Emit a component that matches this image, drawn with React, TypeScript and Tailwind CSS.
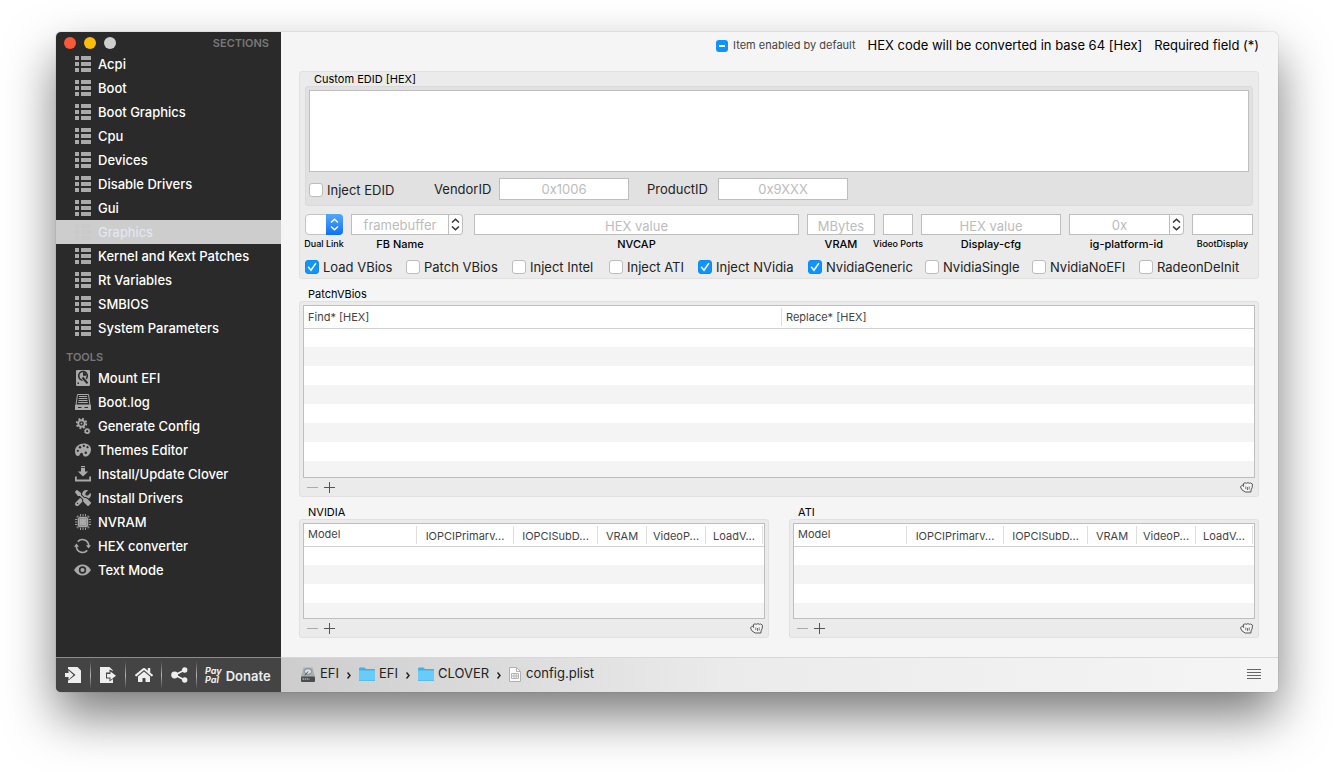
import { useEffect, useRef, type ReactNode } from 'react';
import { FaHome } from 'react-icons/fa';
import { FaScrewdriverWrench } from 'react-icons/fa6';

const sections = [
  'Acpi',
  'Boot',
  'Boot Graphics',
  'Cpu',
  'Devices',
  'Disable Drivers',
  'Gui',
  'Graphics',
  'Kernel and Kext Patches',
  'Rt Variables',
  'SMBIOS',
  'System Parameters',
];

const ListIcon = () => (
  <svg width="16" height="16" viewBox="0 0 16 16" fill="currentColor">
    <path d="M0 0h4v4H0zM6 0h10v4H6zM0 6h4v4H0zM6 6h10v4H6zM0 12h4v4H0zM6 12h10v4H6z" />
  </svg>
);

const DiskIcon = () => (
  <svg width="16" height="16" viewBox="0 0 16 16">
    <rect x="1" y="0" width="14" height="16" rx="1" fill="currentColor" />
    <circle cx="8" cy="5.8" r="4.3" fill="none" stroke="#2a2a2a" strokeWidth="1.6" />
    <path d="M8 5.800V2.300a3.500 3.500 0 0 1 3.400 3.500z" fill="#2a2a2a" />
    <path d="m7.500 7.500 5.300 6" stroke="currentColor" strokeWidth="3.600" />
    <path d="m7.500 7.500 5 5.800" stroke="#2a2a2a" strokeWidth="2" />
    <path d="M2.500 12.500H4V14H2.500z" fill="#2a2a2a" />
  </svg>
);

const LogIcon = () => (
  <svg width="16" height="16" viewBox="0 0 16 16">
    <path d="M2.500.5h11l1.500 10.500H1z" fill="none" stroke="currentColor" />
    <path d="M4 2.500h8M3.700 4.500h8.600M3.500 6.500h9M3.200 8.500h9.600" stroke="currentColor" />
    <path d="M0 11h16v5H0z" fill="currentColor" />
    <path d="M3 13.500h10" stroke="#2a2a2a" />
    <path d="M6.500 13.500h3" stroke="currentColor" />
  </svg>
);

const GearsIcon = () => (
  <svg width="16" height="16" viewBox="0 0 16 16" fill="none" stroke="currentColor">
    <circle cx="6.500" cy="5.500" r="3.300" strokeWidth="1.900" />
    <circle cx="6.500" cy="5.500" r="4.800" strokeWidth="1.800" strokeDasharray="1.900 1.870" />
    <circle cx="6.500" cy="5.500" r="0.900" fill="currentColor" stroke="none" />
    <circle cx="12.200" cy="13.200" r="1.900" strokeWidth="1.600" />
    <circle cx="12.200" cy="13.200" r="2.800" strokeWidth="0.800" strokeDasharray="1.100 1.100" />
  </svg>
);

const PaletteIcon = () => (
  <svg width="16" height="16" viewBox="0 0 16 16">
    <path
      d="M9 1.500C4 1.500 0 4.800 0 9c0 3 1 5 3 5 2.300 0 1.700-3.200 3.600-3.200 2 0 .7 2.900 2.900 3.600C13 15.300 16 11.500 16 7.500c0-3.600-3-6-7-6z"
      fill="currentColor"
    />
    <g fill="#2a2a2a">
      <circle cx="2.800" cy="8.800" r="1.100" />
      <circle cx="5" cy="5.300" r="1.200" />
      <circle cx="8.800" cy="3.900" r="1.100" />
      <circle cx="12.500" cy="5.200" r="1.100" />
      <circle cx="10.800" cy="10.800" r="1.200" />
    </g>
  </svg>
);

const InstallIcon = () => (
  <svg width="16" height="16" viewBox="0 0 16 16" fill="currentColor">
    <path d="M6 0h4v1.200H6zM6 2h4v3.500h3.200L8 10.600 2.800 5.500H6z" />
    <path d="M0 10.500h1.800v3h12.400v-3H16V15.500H0z" />
  </svg>
);

const ChipIcon = () => (
  <svg width="16" height="16" viewBox="0 0 16 16" fill="currentColor">
    <path
      d="M5.500 0v16M8 0v16M10.500 0v16M0 5.500h16M0 8h16M0 10.500h16M3 1.500v13M13 1.500v13M1.500 3h13M1.500 13h13"
      stroke="currentColor"
      strokeWidth="0.900"
    />
    <rect x="2.500" y="2.500" width="11" height="11" rx="1.500" fill="#2a2a2a" />
    <rect x="3" y="3" width="10" height="10" rx="1.500" />
    <rect x="4.500" y="4.500" width="7" height="7" fill="none" stroke="#777" strokeWidth="0.500" />
  </svg>
);

const ConvertIcon = () => (
  <svg width="18" height="16" viewBox="0 0 18 16">
    <path d="M4 3.400A6.600 6.600 0 0 1 15.500 8" fill="none" stroke="currentColor" strokeWidth="1.700" />
    <path d="M14 12.600A6.600 6.600 0 0 1 2.500 8" fill="none" stroke="currentColor" strokeWidth="1.700" />
    <path d="M12.700 7.200h5.300l-2.700 3.500zM0 8.800h5.300L2.600 5.300z" fill="currentColor" />
  </svg>
);

const EyeIcon = () => (
  <svg width="17" height="12" viewBox="0 0 17 12">
    <path d="M0 6C2.500 2 5.300.5 8.500.5S14.500 2 17 6c-2.500 4-5.300 5.500-8.500 5.500S2.500 10 0 6z" fill="currentColor" />
    <circle cx="8.500" cy="6" r="2.900" fill="none" stroke="#2a2a2a" strokeWidth="1.600" />
  </svg>
);

const tools = [
  { name: 'Mount EFI', icon: <DiskIcon /> },
  { name: 'Boot.log', icon: <LogIcon /> },
  { name: 'Generate Config', icon: <GearsIcon /> },
  { name: 'Themes Editor', icon: <PaletteIcon /> },
  { name: 'Install/Update Clover', icon: <InstallIcon /> },
  { name: 'Install Drivers', icon: <FaScrewdriverWrench size={16} /> },
  { name: 'NVRAM', icon: <ChipIcon /> },
  { name: 'HEX converter', icon: <ConvertIcon /> },
  { name: 'Text Mode', icon: <EyeIcon /> },
];

function SideItem({ icon, name, active }: { icon: ReactNode; name: string; active?: boolean }) {
  return (
    <li>
      <a
        href="#"
        className={
          active
            ? 'flex h-6 items-center gap-[7px] bg-[#cdcdcd] pl-[18px] text-[#e3e9f5]'
            : 'flex h-6 items-center gap-[7px] pl-[18px] font-medium text-white'
        }
      >
        <span
          className={
            active
              ? 'flex w-[17px] shrink-0 justify-center text-[#cacaca]'
              : 'flex w-[17px] shrink-0 justify-center text-[#a9a9a9]'
          }
        >
          {icon}
        </span>
        <span className="pt-[2px]">{name}</span>
      </a>
    </li>
  );
}

function Sidebar() {
  return (
    <aside className="flex w-[225px] shrink-0 flex-col bg-[#2a2a2a] text-[13px]">
      <div className="flex h-5 items-center gap-2 pt-[2px] pr-3 pl-2">
        <button aria-label="Close" className="size-3 rounded-full bg-[#fc5736]" />
        <button aria-label="Minimize" className="size-3 rounded-full bg-[#fdbc0a]" />
        <button aria-label="Zoom" className="size-3 rounded-full bg-[#cfcfcf]" />
        <h2 className="ml-auto text-[11px] font-semibold text-[#787878]">SECTIONS</h2>
      </div>
      <ul>
        {sections.map((name) => (
          <SideItem key={name} name={name} icon={<ListIcon />} active={name === 'Graphics'} />
        ))}
      </ul>
      <h2 className="flex h-[26px] items-end pb-[1px] pl-[10px] text-[11px] font-semibold text-[#787878]">TOOLS</h2>
      <ul>
        {tools.map((t) => (
          <SideItem key={t.name} name={t.name} icon={t.icon} />
        ))}
      </ul>
      <SidebarFooter />
    </aside>
  );
}

const Divider = () => <span className="h-7 w-px bg-linear-to-b from-[#444] via-[#b5b5b5] to-[#444]" />;

function SidebarFooter() {
  return (
    <div className="mt-auto flex h-[35px] items-center border-t border-[#8d8d8d] bg-[#444] text-[#eee]">
      <button aria-label="Import" className="flex w-[34px] justify-center">
        <svg width="16" height="16" viewBox="0 0 16 16" fill="currentColor">
          <path d="M3 0h9.500L16 3.500V16H3v-2.500L4 13l6.500-5L4 2.500 3 2z" />
          <path d="M3.500 3.200 8.500 8l-5 4.800V10H0V6h3.500z" />
        </svg>
      </button>
      <Divider />
      <button aria-label="Export" className="flex w-[34px] justify-center">
        <svg width="16" height="16" viewBox="0 0 16 16" fill="currentColor">
          <path d="M0 0h9.500L13 3.500V4L9.500 2.500v3H6v6h3.500v3L13 12v4H0z" />
          <path d="M10.500 4.500 16 8.800l-5.500 4.300v-2.600H7V7h3.500z" />
        </svg>
      </button>
      <Divider />
      <button aria-label="Home" className="flex w-[35px] justify-center">
        <FaHome size={18} />
      </button>
      <Divider />
      <button aria-label="Share" className="flex w-[34px] justify-center">
        <svg width="17" height="16" viewBox="0 0 17 16" fill="currentColor">
          <path d="M13.500 3 4 8l9.500 5" fill="none" stroke="currentColor" strokeWidth="1.700" />
          <circle cx="13.700" cy="3" r="2.700" />
          <circle cx="3.600" cy="8" r="3.400" />
          <circle cx="13.700" cy="13" r="2.700" />
        </svg>
      </button>
      <Divider />
      <button className="flex flex-1 items-center gap-1 pl-2 text-[13px] font-semibold">
        <span className="text-left text-[9px] leading-[9px] font-bold italic">
          Pay
          <br />
          Pal
        </span>
        <span className="pt-[3px]">Donate</span>
      </button>
    </div>
  );
}

function Check({ label, checked }: { label: string; checked?: boolean }) {
  return (
    <label className="flex items-center gap-1 leading-[14px] whitespace-nowrap">
      <span className="grid shrink-0">
        <input
          type="checkbox"
          defaultChecked={checked}
          className="peer col-start-1 row-start-1 size-[14px] appearance-none rounded-[3px] border border-[#bdbdbd] bg-white checked:border-[#0a8bf5] checked:bg-[#0f94fb]"
        />
        <svg
          viewBox="0 0 14 14"
          className="pointer-events-none col-start-1 row-start-1 hidden size-[14px] peer-checked:block"
        >
          <path d="m3.500 7.300 2.500 3L10.600 3.600" fill="none" stroke="#fff" strokeWidth="1.600" strokeLinecap="round" />
        </svg>
      </span>
      {label}
    </label>
  );
}

function DefaultHint() {
  const ref = useRef<HTMLInputElement>(null);

  useEffect(() => {
    if (ref.current) ref.current.indeterminate = true;
  }, []);

  return (
    <label className="flex items-center gap-[5px] text-[11px] text-[#444]">
      <span className="grid items-center justify-items-center">
        <input ref={ref} type="checkbox" className="col-start-1 row-start-1 size-3 appearance-none rounded-[3px] bg-[#0f94fb]" />
        <span className="pointer-events-none col-start-1 row-start-1 h-[2px] w-[6px] bg-white" />
      </span>
      Item enabled by default
    </label>
  );
}

const fieldStyle =
  'w-full min-w-0 border border-[#bebebe] bg-white pt-[2px] text-center text-[13px] placeholder:text-[#bcbcbc] outline-none';

const Arrows = () => (
  <svg width="9" height="13" viewBox="0 0 9 13" fill="none" stroke="currentColor" strokeWidth="1.500">
    <path d="M1 4.500 4.500 1.200 8 4.500M1 8.500l3.500 3.300L8 8.500" />
  </svg>
);

function Field({ id, label, placeholder, small }: { id: string; label: string; placeholder?: string; small?: boolean }) {
  return (
    <div className="flex min-w-0 flex-col items-center">
      <input id={id} placeholder={placeholder} className={`${fieldStyle} h-[21px]`} />
      <FieldLabel id={id} label={label} small={small} />
    </div>
  );
}

function FieldLabel({ id, label, small }: { id: string; label: string; small?: boolean }) {
  return (
    <label
      htmlFor={id}
      className={
        small
          ? 'flex h-[18px] items-center text-[9px] font-medium whitespace-nowrap text-black'
          : 'flex h-[18px] items-center text-[11px] font-medium whitespace-nowrap text-black'
      }
    >
      {label}
    </label>
  );
}

function Combo({ id, label, placeholder }: { id: string; label: string; placeholder: string }) {
  return (
    <>
      <div className="flex h-[21px] w-full">
        <input id={id} placeholder={placeholder} className={fieldStyle} />
        <button
          aria-label={`${label} options`}
          className="flex w-[14px] shrink-0 items-center justify-center rounded-r-[4px] border border-l-0 border-[#bebebe] bg-white text-[#333]"
        >
          <Arrows />
        </button>
      </div>
      <FieldLabel id={id} label={label} />
    </>
  );
}

function GraphicsForm() {
  return (
    <section className="rounded-[3px] border border-[#e0e0e0] bg-[#ebebeb] px-[5px] pb-1 text-[#222]">
      <label htmlFor="edid" className="flex h-[14px] items-center pl-[9px] text-[11px] text-black">
        Custom EDID [HEX]
      </label>
      <div className="rounded-[3px] border border-[#dadada] bg-[#e1e1e1] px-[3px] pt-[3px] pb-[5px]">
        <textarea id="edid" className="block h-[82px] w-full resize-none border border-[#bebebe] bg-white outline-none" />
        <div className="flex items-center pt-[6px] text-[13px]">
          <div className="w-[125px] pt-[2px]">
            <Check label="Inject EDID" />
          </div>
          <label htmlFor="vendor" className="w-[65px] pt-[2px]">
            VendorID
          </label>
          <div className="flex h-[22px] w-[130px]">
            <input id="vendor" placeholder="0x1006" className={fieldStyle} />
          </div>
          <label htmlFor="product" className="w-[89px] pt-[2px] pl-[18px]">
            ProductID
          </label>
          <div className="flex h-[22px] w-[130px]">
            <input id="product" placeholder="0x9XXX" className={fieldStyle} />
          </div>
        </div>
      </div>

      <div className="grid grid-cols-[38px_115px_1fr_68px_30px_140px_115px_61px] gap-2 pt-2">
        <div className="flex flex-col items-center">
          <div className="grid h-[21px] w-full">
            <select
              id="dual"
              className="col-start-1 row-start-1 h-[21px] w-full appearance-none rounded-[4px] border border-[#c4c4c4] bg-white outline-none"
            >
              <option></option>
            </select>
            <span className="pointer-events-none col-start-1 row-start-1 flex h-[21px] w-[17px] items-center justify-center justify-self-end rounded-r-[4px] bg-linear-to-b from-[#52a8fb] to-[#0870f8] text-white">
              <Arrows />
            </span>
          </div>
          <FieldLabel id="dual" label="Dual Link" small />
        </div>
        <div className="grid justify-items-center pr-[3px] *:[label]:pr-[14px]">
          <Combo id="fb" label="FB Name" placeholder="framebuffer" />
        </div>
        <Field id="nvcap" label="NVCAP" placeholder="HEX value" />
        <Field id="vram" label="VRAM" placeholder="MBytes" />
        <Field id="ports" label="Video Ports" small />
        <Field id="cfg" label="Display-cfg" placeholder="HEX value" />
        <div className="grid justify-items-center">
          <Combo id="ig" label="ig-platform-id" placeholder="0x" />
        </div>
        <Field id="bootdisplay" label="BootDisplay" small />
      </div>

      <div className="grid grid-cols-[101fr_106fr_97fr_89fr_110fr_117fr_107fr_107fr_114fr] pt-[7px] text-[13px]">
        <Check label="Load VBios" checked />
        <Check label="Patch VBios" />
        <Check label="Inject Intel" />
        <Check label="Inject ATI" />
        <Check label="Inject NVidia" checked />
        <Check label="NvidiaGeneric" checked />
        <Check label="NvidiaSingle" />
        <Check label="NvidiaNoEFI" />
        <Check label="RadeonDeInit" />
      </div>
    </section>
  );
}

function TableBar() {
  return (
    <div className="flex h-[18px] items-center gap-[6px] pr-[2px] pl-1 text-[#555]">
      <button aria-label="Remove row" className="text-[#aaa]">
        <svg width="11" height="11" viewBox="0 0 11 11" stroke="currentColor">
          <path d="M0 5.500h11" />
        </svg>
      </button>
      <button aria-label="Add row">
        <svg width="11" height="11" viewBox="0 0 11 11" stroke="currentColor">
          <path d="M0 5.500h11M5.500 0v11" />
        </svg>
      </button>
      <button aria-label="Drag rows" className="ml-auto">
        <svg width="13" height="11" viewBox="0 0 13 11" fill="#f4f4f4" stroke="#555" strokeWidth="1" strokeLinejoin="round">
          <path d="M3.600 3 3.400 1.600 5 .8l1.300.5L8 .6l1.300.7 1.300-.3 1.900 1.200-.4 3.600-1 2-.2 2.200H5.200L1.900 7.800.5 5l1.200-1.500z" />
          <path d="M5.800 4.500v2.600M7.500 5v3M9.200 4.500v3M3.600 3v2" strokeWidth="0.800" />
        </svg>
      </button>
    </div>
  );
}

function EmptyRows({ rows, cols }: { rows: number; cols: number }) {
  return (
    <tbody>
      {Array.from({ length: rows }, (_, i) => (
        <tr key={i} className="h-[19px] even:bg-[#f4f4f4]">
          <td colSpan={cols} className="p-0" />
        </tr>
      ))}
    </tbody>
  );
}

function PatchTable() {
  return (
    <section className="flex flex-1 flex-col">
      <h3 className="flex h-[22px] items-center pt-2 pl-[9px] text-[11px] text-black">PatchVBios</h3>
      <div className="flex flex-1 flex-col rounded-[3px] border border-[#e0e0e0] bg-[#ebebeb] px-[3px] pt-[3px]">
        <div className="min-h-[160px] flex-1 basis-0 overflow-hidden border border-[#bebebe] bg-white">
          <table className="w-full table-fixed border-collapse text-left text-[11px] text-[#444]">
            <thead>
              <tr className="h-[22px] border-b border-[#d0d0d0]">
                <th className="w-[478px] p-0 font-normal">
                  <div className="flex h-[18px] items-center border-r border-[#dedede] pl-1">Find* [HEX]</div>
                </th>
                <th className="p-0 pl-1 font-normal">Replace* [HEX]</th>
              </tr>
            </thead>
            <EmptyRows rows={8} cols={2} />
          </table>
        </div>
        <TableBar />
      </div>
    </section>
  );
}

function CardTable({ title }: { title: string }) {
  return (
    <section className="min-w-0 flex-1">
      <h3 className="flex h-[22px] items-center pt-2 pl-[9px] text-[11px] text-black">{title}</h3>
      <div className="rounded-[3px] border border-[#e0e0e0] bg-[#ebebeb] px-[3px] pt-[3px]">
        <div className="h-[96px] overflow-hidden border border-[#bebebe] bg-white">
          <table className="w-full table-fixed border-collapse text-[11px] text-[#444]">
            <colgroup>
              <col />
              <col className="w-[97px]" />
              <col className="w-[84px]" />
              <col className="w-[49px]" />
              <col className="w-[59px]" />
              <col className="w-[57px]" />
              <col className="w-px" />
            </colgroup>
            <thead>
              <tr className="h-[22px] border-b border-[#d0d0d0]">
                <th className="p-0 font-normal">
                  <div className="h-[18px] border-r border-[#dedede] pl-1 text-left leading-[16px]">Model</div>
                </th>
                {['IOPCIPrimarv...', 'IOPCISubD...', 'VRAM', 'VideoP...', 'LoadV...'].map((h) => (
                  <th key={h} className="p-0 font-normal">
                    <div className="h-[18px] border-r border-[#dedede] leading-[20px] whitespace-nowrap">{h}</div>
                  </th>
                ))}
                <th className="p-0" />
              </tr>
            </thead>
            <EmptyRows rows={4} cols={7} />
          </table>
        </div>
        <TableBar />
      </div>
    </section>
  );
}

const Folder = () => (
  <svg width="16" height="14" viewBox="0 0 16 14">
    <path d="M0 1.500 1 .5h4.500L7 2h8.500l.5.500V14H0z" fill="#45aee4" />
    <path d="M0 3.500h16V13l-.5.500H.5L0 13z" fill="#68cbfa" />
  </svg>
);

const Drive = () => (
  <svg width="14" height="15" viewBox="0 0 14 15">
    <path d="M2.500.5h9L14 10H0z" fill="#a9b0b5" />
    <ellipse cx="7" cy="4.500" rx="3.600" ry="2.800" fill="#dde1e4" stroke="#6f777c" strokeWidth="0.800" />
    <path d="m7 4.500-3 4" stroke="#555" />
    <rect y="9.500" width="14" height="5.500" rx="1" fill="#4a4d50" />
    <path d="M1.500 12h7" stroke="#ddd" strokeDasharray="1.500 0.700" />
  </svg>
);

const FileIcon = () => (
  <svg width="12" height="15" viewBox="0 0 12 15">
    <path d="M.5.500h7l4 4v10H.5z" fill="#fbfbfb" stroke="#b0b0b0" />
    <path d="M7.500.500v4h4" fill="none" stroke="#b0b0b0" />
    <path d="M2.500 6.500h7v5h-7zM2.500 9h7M5 6.500v5M7.200 6.500v5" fill="none" stroke="#b5b5b5" />
  </svg>
);

const Sep = () => (
  <svg width="4" height="7" viewBox="0 0 4 7" fill="none" stroke="#222" strokeWidth="1.500" className="mx-2 mt-[2px]">
    <path d="m.5.500 2.500 3-2.500 3" />
  </svg>
);

function PathBar() {
  return (
    <footer className="flex h-[35px] items-center border-t border-[#d8d8d8] bg-linear-to-r from-[#cdcdcd] via-[#ebebeb] via-45% to-[#f5f5f5] pr-[17px] pb-[2px] pl-5 text-[13px] text-[#222]">
      <nav className="flex items-center">
        <a href="#" className="flex items-center gap-[5px]">
          <Drive /> EFI
        </a>
        <Sep />
        <a href="#" className="flex items-center gap-1">
          <Folder /> EFI
        </a>
        <Sep />
        <a href="#" className="flex items-center gap-1">
          <Folder /> CLOVER
        </a>
        <Sep />
        <a href="#" className="flex items-center gap-[5px]">
          <FileIcon /> config.plist
        </a>
      </nav>
      <button aria-label="Menu" className="ml-auto">
        <svg width="14" height="10" viewBox="0 0 14 10" stroke="#666">
          <path d="M0 .500h14M0 3.500h14M0 6.500h14M0 9.500h14" />
        </svg>
      </button>
    </footer>
  );
}

export default function App() {
  return (
    <div className="flex min-h-screen bg-white px-14 pt-8 pb-20 font-['Inter','Liberation_Sans',sans-serif]">
      <div className="flex min-w-0 flex-1 overflow-hidden rounded-[5px] shadow-[0_24px_50px_rgba(0,0,0,0.52),0_0_1px_rgba(0,0,0,0.5)]">
        <Sidebar />
        <main className="flex min-w-0 flex-1 flex-col bg-[#f5f5f5]">
          <header className="flex h-[39px] items-start justify-end gap-3 pt-[5px] pr-[19px] text-[13px] leading-[17px] text-black">
            <DefaultHint />
            <span>HEX code will be converted in base 64 [Hex]</span>
            <span>Required field (*)</span>
          </header>
          <div className="flex flex-1 flex-col pr-[19px] pb-[19px] pl-[18px]">
            <GraphicsForm />
            <PatchTable />
            <div className="flex gap-5">
              <CardTable title="NVIDIA" />
              <CardTable title="ATI" />
            </div>
          </div>
          <PathBar />
        </main>
      </div>
    </div>
  );
}
